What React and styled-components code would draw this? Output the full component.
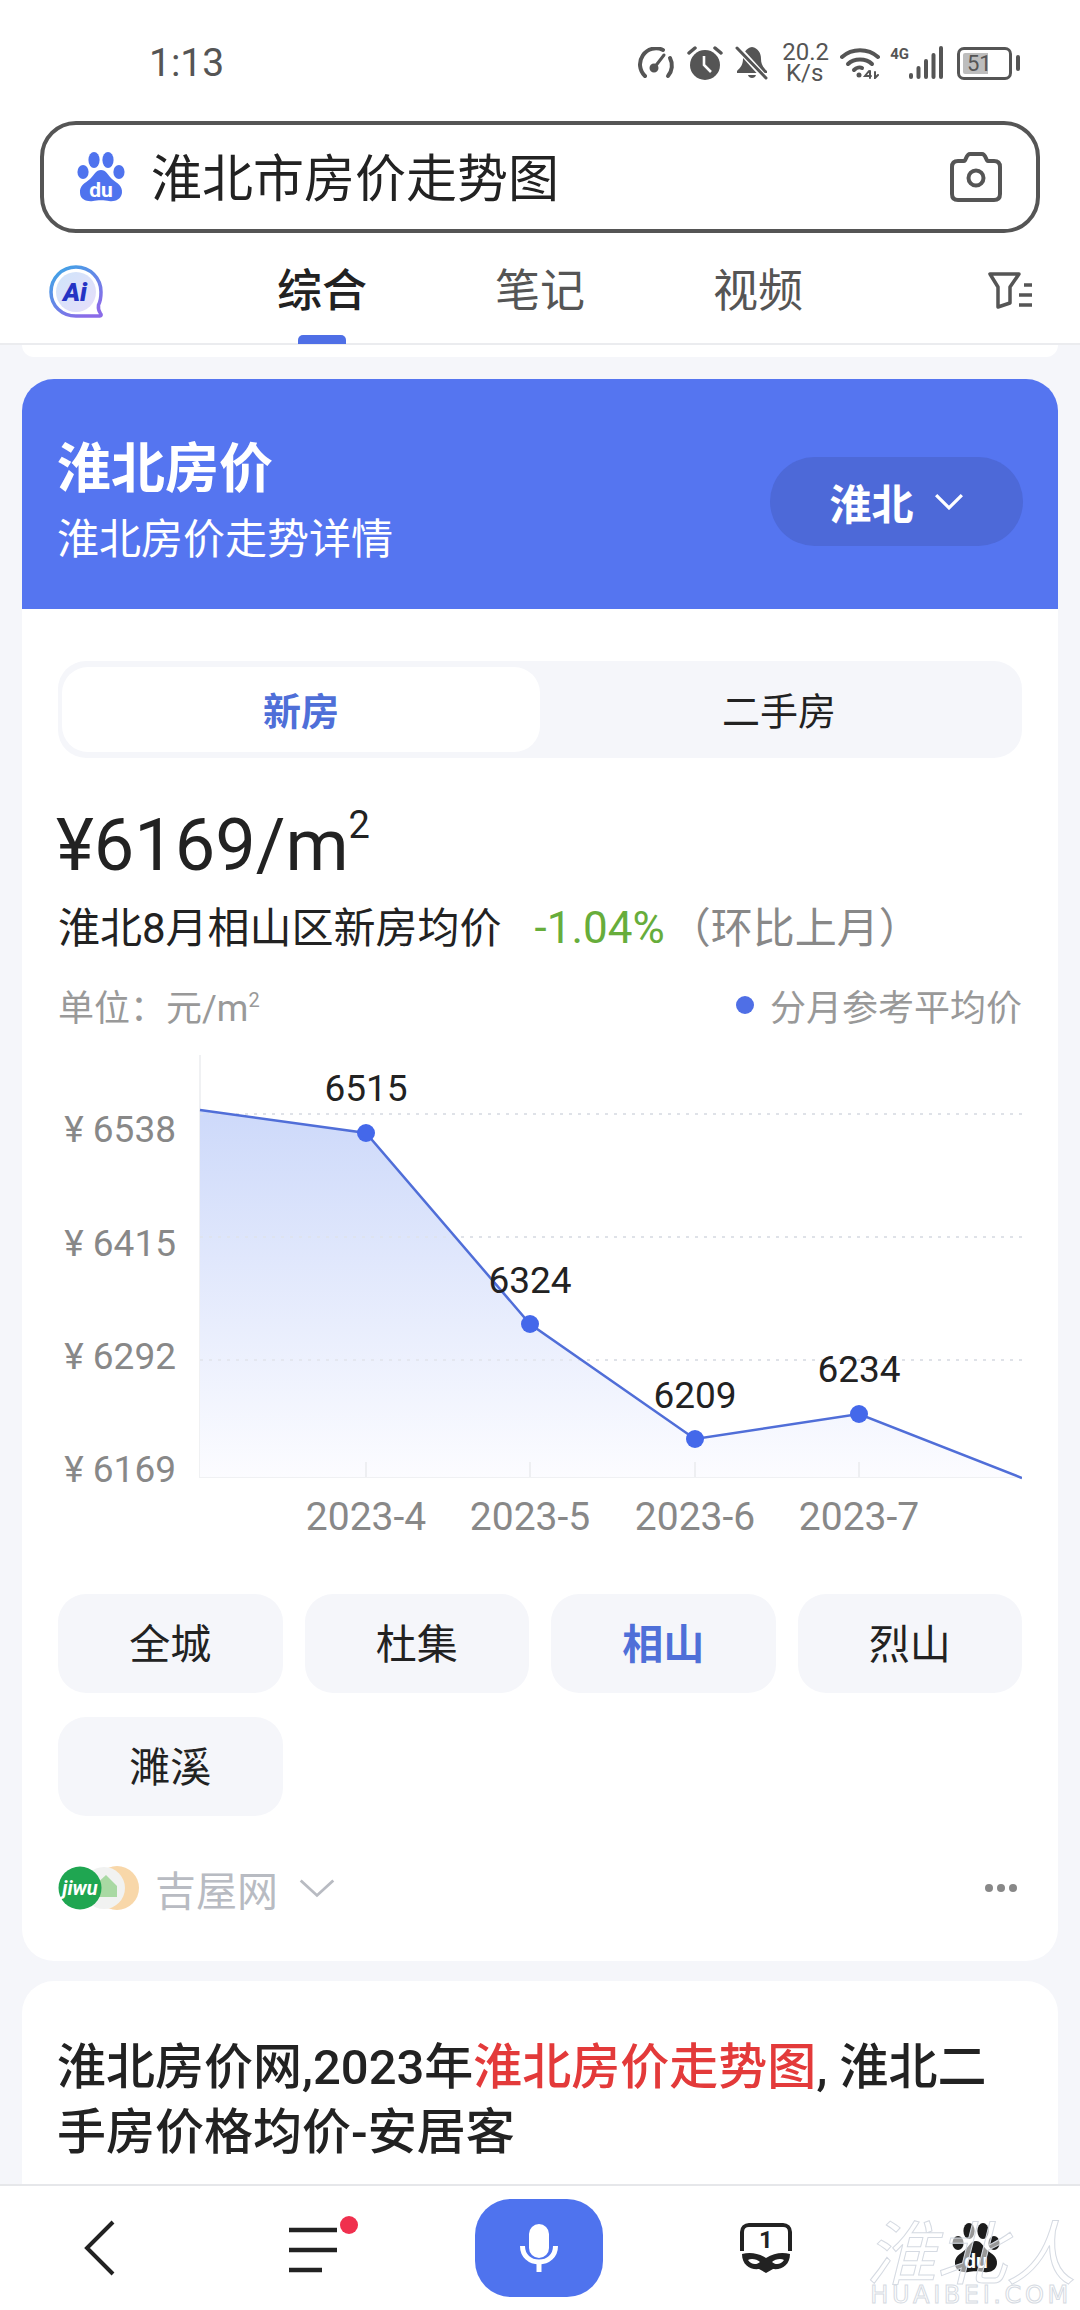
import React from "react";
import styled, { createGlobalStyle } from "styled-components";

const Global = createGlobalStyle`
  html, body { margin: 0; padding: 0; background: #f5f6fa; }
  * { box-sizing: border-box; }
  body { font-family: Roboto, "Noto Sans CJK SC", sans-serif; }
`;

const Page = styled.div`
  position: relative;
  width: 1080px;
  height: 2310px;
  overflow: hidden;
  display: flex;
  flex-direction: column;
  background: #f5f6fa;
  color: #222;
`;

const Header = styled.header`
  flex: none;
  height: 345px;
  background: #fff;
  border-bottom: 2px solid #ebecef;
  padding: 0 40px;
`;

const StatusBar = styled.div`
  height: 121px;
  display: flex;
  align-items: center;
  padding: 5px 0 0 109px;
  color: #555;
`;

const Time = styled.span`
  font-size: 39px;
  line-height: 1;
  margin-right: auto;
`;

const StatusIcons = styled.div`
  display: flex;
  align-items: center;
  margin-right: 20px;
`;

const Speed = styled.div`
  width: 45px;
  margin: 0 13px;
  font-size: 24px;
  line-height: 21px;
  text-align: center;
  white-space: nowrap;
`;

const NetLabel = styled.span`
  font-size: 15px;
  font-weight: 700;
  align-self: flex-start;
  margin: 5px 0 0 10px;
  line-height: 1;
`;

const Battery = styled.div`
  width: 55px;
  height: 33px;
  margin-left: 14px;
  border: 3px solid #555;
  border-radius: 7px;
  padding: 3px;
  display: flex;
`;

const BatteryFill = styled.div`
  flex: 1;
  border-radius: 2px;
  background: linear-gradient(90deg, #bdbdbd 58%, transparent 58%);
  font-size: 22px;
  line-height: 21px;
  padding-left: 4px;
`;

const BatteryNub = styled.div`
  width: 4px;
  height: 16px;
  margin-left: 4px;
  border-radius: 2px;
  background: #555;
`;

const SearchBox = styled.div`
  height: 112px;
  border: 4px solid #555;
  border-radius: 36px;
  display: flex;
  align-items: center;
  padding: 0 34px 0 33px;
  gap: 26px;
`;

const Query = styled.span`
  flex: 1;
  font-size: 51px;
  line-height: 1;
  color: #222;
  padding-top: 5px;
`;

const TabBar = styled.nav`
  position: relative;
  height: 110px;
  display: flex;
  align-items: center;
  margin: 0 -40px;
  padding: 8px 48px 0;
`;

const Tabs = styled.div`
  display: flex;
  margin-left: 109px;
`;

const Tab = styled.div`
  position: relative;
  width: 218px;
  text-align: center;
  font-size: 45px;
  line-height: 60px;
  font-weight: ${(p) => (p.$active ? 500 : 400)};
  color: ${(p) => (p.$active ? "#222" : "#555")};
`;

const TabMark = styled.div`
  position: absolute;
  left: 85px;
  top: 73px;
  width: 48px;
  height: 9px;
  border-radius: 5px 5px 0 0;
  background: #4f6fe6;
`;

const FilterSlot = styled.div`
  margin-left: auto;
  display: flex;
  margin-top: -2px;
`;

const Feed = styled.main`
  flex: 1;
  min-height: 0;
  overflow: hidden;
  padding: 0 22px;
`;

const CardTail = styled.div`
  height: 12px;
  background: #fff;
  border-radius: 0 0 30px 30px;
  margin-bottom: 22px;
`;

const Card = styled.section`
  background: #fff;
  border-radius: 32px;
  overflow: hidden;
  margin-bottom: 20px;
`;

const Banner = styled.div`
  height: 230px;
  background: #5575f0;
  color: #fff;
  display: flex;
  justify-content: space-between;
  align-items: flex-start;
  padding: 56px 35px 0 35px;
`;

const BannerTitle = styled.div`
  font-size: 54px;
  line-height: 70px;
  font-weight: 700;
`;

const BannerSub = styled.div`
  font-size: 42px;
  line-height: 60px;
  margin-top: 5px;
`;

const CityPill = styled.div`
  width: 253px;
  height: 89px;
  margin-top: 22px;
  border-radius: 45px;
  background: #4d69d8;
  display: flex;
  align-items: center;
  justify-content: center;
  gap: 20px;
  font-size: 42px;
  font-weight: 700;
`;

const Body = styled.div`
  padding: 52px 36px 43px;
`;

const Segment = styled.div`
  height: 97px;
  padding: 6px 4px;
  border-radius: 28px;
  background: #f5f6fa;
  display: flex;
`;

const SegmentItem = styled.div`
  flex: 1;
  display: flex;
  align-items: center;
  justify-content: center;
  font-size: 38px;
  padding-bottom: 3px;
  border-radius: 26px;
  font-weight: ${(p) => (p.$active ? 700 : 400)};
  color: ${(p) => (p.$active ? "#4f6fd8" : "#222")};
  background: ${(p) => (p.$active ? "#fff" : "transparent")};
`;

const Price = styled.div`
  margin: 43px 0 0 -2px;
  font-size: 72px;
  line-height: 90px;
  color: #222;
  white-space: nowrap;
`;

const PriceSup = styled.sup`
  font-size: 38px;
  line-height: 0;
  vertical-align: 32px;
`;

const Summary = styled.div`
  margin-top: 7px;
  font-size: 42px;
  line-height: 60px;
  display: flex;
  align-items: baseline;
  white-space: nowrap;
`;

const Change = styled.span`
  margin-left: 33px;
  font-size: 44px;
  color: #67ad3b;
`;

const Compare = styled.span`
  margin-left: 4px;
  color: #888;
`;

const UnitRow = styled.div`
  margin-top: 21px;
  height: 50px;
  display: flex;
  align-items: center;
  justify-content: space-between;
  font-size: 36px;
  color: #999;
`;

const UnitSup = styled.sup`
  font-size: 20px;
  line-height: 0;
  vertical-align: 14px;
`;

const Legend = styled.div`
  display: flex;
  align-items: center;
  gap: 16px;
`;

const LegendDot = styled.span`
  width: 18px;
  height: 18px;
  border-radius: 50%;
  background: #4f6fe6;
`;

const ChartWrap = styled.div`
  margin-top: 20px;
  height: 490px;
  svg { display: block; }
  text { font-family: Roboto, "Noto Sans CJK SC", sans-serif; }
`;

const Chips = styled.div`
  margin-top: 54px;
  display: grid;
  grid-template-columns: repeat(4, 1fr);
  column-gap: 22px;
  row-gap: 24px;
`;

const Chip = styled.div`
  height: 99px;
  border-radius: 28px;
  background: #f5f6fa;
  display: flex;
  align-items: center;
  justify-content: center;
  font-size: 41px;
  padding-bottom: 6px;
  font-weight: ${(p) => (p.$active ? 700 : 400)};
  color: ${(p) => (p.$active ? "#4f6fd8" : "#222")};
`;

const SourceRow = styled.div`
  margin-top: 42px;
  height: 60px;
  display: flex;
  align-items: center;
`;

const SourceName = styled.span`
  font-size: 41px;
  color: #b8bbc2;
  margin: 0 20px 0 15px;
`;

const MoreDots = styled.div`
  margin-left: auto;
  margin-right: 5px;
  display: flex;
  gap: 4px;
`;

const Dot = styled.span`
  width: 8px;
  height: 8px;
  border-radius: 50%;
  background: #888;
`;

const ResultCard = styled(Card)`
  padding: 54px 36px 60px 35px;
  margin-bottom: 0;
`;

const ResultTitle = styled.h2`
  margin: 0;
  font-size: 49px;
  line-height: 65px;
  font-weight: 500;
  color: #222;
`;

const Highlight = styled.em`
  font-style: normal;
  color: #e33a3a;
`;

const BottomNav = styled.footer`
  position: absolute;
  left: 0;
  right: 0;
  bottom: 0;
  height: 126px;
  background: #fff;
  border-top: 2px solid #e6e7ea;
  display: grid;
  grid-template-columns: 200px 226px 226px 228px 192px;
  align-items: center;
  justify-items: center;
`;

const MicButton = styled.div`
  width: 128px;
  height: 98px;
  border-radius: 36px;
  background: #4f73ee;
  display: flex;
  align-items: center;
  justify-content: center;
`;

const Watermark = styled.div`
  position: absolute;
  right: 3px;
  bottom: 4px;
  width: 212px;
  color: rgba(255, 255, 255, 0.55);
  -webkit-text-stroke: 1px #d5dae2;
  text-align: center;
  pointer-events: none;
`;

const WatermarkMark = styled.div`
  font-size: 70px;
  line-height: 54px;
  font-style: italic;
  white-space: nowrap;
`;

const WatermarkUrl = styled.div`
  font-family: "DejaVu Sans", sans-serif;
  font-size: 24px;
  line-height: 22px;
  letter-spacing: 3.6px;
  white-space: nowrap;
  margin: 2px -12px 0;
`;

const Paw = ({ color, size = 48 }) => (
  <svg width={size} height={size * 1.04} viewBox="0 0 48 50" fill={color} style={{ flex: "none" }}>
    <ellipse cx="6" cy="20" rx="5.6" ry="7" />
    <ellipse cx="17" cy="8" rx="5.6" ry="8" />
    <ellipse cx="31" cy="8" rx="5.6" ry="8" />
    <ellipse cx="42" cy="20" rx="5.6" ry="7" />
    <path d="M24 18C29 18 31 23 35 27C40 31 46 34 45 41C44 48 37 50 32 49C28 48 20 48 16 49C11 50 3 48 3 41C2 34 8 31 13 27C17 23 19 18 24 18Z" />
    <text x="24" y="45.5" textAnchor="middle" fill="#fff" fontSize="21" fontWeight="700" fontFamily="Roboto, sans-serif">du</text>
  </svg>
);

const GaugeIcon = () => (
  <svg width="37" height="32" viewBox="0 0 37 32" fill="none" stroke="#555" strokeWidth="4" strokeLinecap="round">
    <path d="M7 29A16 16 0 0 1 25 3" />
    <path d="M32 11A16 16 0 0 1 30 29" />
    <path d="M16 21L26 8" strokeWidth="3" />
    <circle cx="16" cy="21" r="2.5" fill="#555" />
  </svg>
);

const AlarmIcon = () => (
  <svg width="36" height="34" viewBox="0 0 36 34" style={{ marginLeft: 12 }}>
    <circle cx="18" cy="19" r="15" fill="#555" />
    <path d="M2 7L8 2M34 7L28 2" stroke="#555" strokeWidth="3.5" strokeLinecap="round" />
    <path d="M17 10V19L24 26" stroke="#fff" strokeWidth="2.6" fill="none" />
  </svg>
);

const BellOffIcon = () => (
  <svg width="34" height="34" viewBox="0 0 34 34" style={{ marginLeft: 12 }}>
    <path d="M17 1C11 2 8 7 8 13C8 19 5 22 2 25V27H32V25C29 22 26 19 26 13C26 7 23 2 17 1Z" fill="#555" />
    <path d="M13 29H21C20 33 14 33 13 29Z" fill="#555" />
    <path d="M3 2L31 33" stroke="#fff" strokeWidth="6" />
    <path d="M2 2L31 32" stroke="#555" strokeWidth="3" strokeLinecap="round" />
  </svg>
);

const WifiIcon = () => (
  <svg width="40" height="32" viewBox="0 0 40 32" fill="none" stroke="#555" strokeWidth="4" strokeLinecap="round">
    <path d="M2 10C12 1 28 1 38 10" />
    <path d="M8 17C14 11 26 11 32 17" />
    <path d="M14 23C16.500 20.500 20 20 22 21" />
    <circle cx="19" cy="28" r="2.500" fill="#555" stroke="none" />
    <path d="M29 24L25 29H31M30 24V31M35 25V31L38 28" strokeWidth="2" />
  </svg>
);

const SignalIcon = () => (
  <svg width="34" height="34" viewBox="0 0 34 34" fill="#555">
    <rect x="0" y="27" width="4" height="6" rx="2" />
    <rect x="7.500" y="20" width="4" height="13" rx="2" />
    <rect x="15" y="13" width="4" height="20" rx="2" />
    <rect x="22.500" y="7" width="4" height="26" rx="2" />
    <rect x="30" y="0" width="4" height="33" rx="2" />
  </svg>
);

const CameraIcon = () => (
  <svg width="52" height="50" viewBox="0 0 52 50" fill="none" stroke="#555" strokeWidth="4" strokeLinejoin="round" style={{ flex: "none" }}>
    <path d="M8 9H14C16 9 16 2 20 2H32C36 2 36 9 38 9H44C48 9 50 11 50 15V42C50 46 48 48 44 48H8C4 48 2 46 2 42V15C2 11 4 9 8 9Z" />
    <circle cx="26" cy="26" r="7.500" />
  </svg>
);

const AiIcon = () => (
  <svg width="56" height="56" viewBox="0 0 56 56" style={{ flex: "none" }}>
    <defs>
      <linearGradient id="aiStroke" x1="0" y1="0" x2="0.7" y2="1">
        <stop offset="0" stopColor="#3aa8e6" />
        <stop offset="1" stopColor="#8a6be8" />
      </linearGradient>
      <linearGradient id="aiFill" x1="0" y1="0" x2="1" y2="1">
        <stop offset="0" stopColor="#cfe4fa" />
        <stop offset="1" stopColor="#e7defa" />
      </linearGradient>
    </defs>
    <path d="M28 3C14 3 3 14 3 28C3 42 14 52 28 52H52C53.500 52 53.500 50.500 52.500 49.500C50.500 47 50 45 50.500 41C52.500 37 53 32 53 28C53 14 42 3 28 3Z" fill="#fff" stroke="url(#aiStroke)" strokeWidth="3.500" strokeLinejoin="round" />
    <circle cx="28" cy="28" r="20" fill="url(#aiFill)" />
    <text x="27" y="37" textAnchor="middle" fill="#2433c4" fontSize="26" fontWeight="900" fontStyle="italic" fontFamily="Roboto, sans-serif">Ai</text>
  </svg>
);

const FilterIcon = () => (
  <svg width="44" height="38" viewBox="0 0 44 38" fill="none" stroke="#555" strokeWidth="3.500" strokeLinejoin="round">
    <path d="M2 2H31L22 15V31L10 35V15Z" />
    <path d="M36 13H44M31 23H44M31 33H44" />
  </svg>
);

const ChevronDown = ({ width, height, stroke = "#fff", sw = 3 }) => (
  <svg width={width} height={height} viewBox="0 0 28 16" fill="none" stroke={stroke} strokeWidth={sw} preserveAspectRatio="none">
    <path d="M2 2L14 14L26 2" />
  </svg>
);

const SourceLogos = () => (
  <svg width="82" height="44" viewBox="0 0 82 44" style={{ flex: "none" }}>
    <circle cx="59" cy="22" r="22" fill="#f8d7a9" />
    <circle cx="46" cy="22" r="21" fill="#f1f2f1" />
    <path d="M36 20L48 9L59 20V31H36Z" fill="#a9d9a3" />
    <circle cx="22" cy="22" r="21.500" fill="#1fa651" />
    <text x="22" y="29" textAnchor="middle" fill="#fff" fontSize="20" fontWeight="700" fontStyle="italic" fontFamily="Roboto, sans-serif">jiwu</text>
  </svg>
);

const grid = [64, 187, 310];
const points = [
  [308, 83, "6515", 38, "2023-4"],
  [472, 274, "6324", 230, "2023-5"],
  [637, 389, "6209", 345, "2023-6"],
  [801, 364, "6234", 319, "2023-7"],
];
const line = [[142, 60], ...points.map((p) => [p[0], p[1]]), [964, 428]];
const yLabels = [["6538", 92], ["6415", 206], ["6292", 319], ["6169", 432]];

const PriceChart = () => {
  const path = line.map((p, i) => `${i ? "L" : "M"}${p[0]} ${p[1]}`).join(" ");
  return (
    <svg width="964" height="490" viewBox="0 0 964 490">
      <defs>
        <linearGradient id="area" x1="0" y1="0" x2="0" y2="1">
          <stop offset="0" stopColor="#cdd9fa" />
          <stop offset="1" stopColor="#fcfcff" />
        </linearGradient>
      </defs>
      <path d="M142 5V427H964" fill="none" stroke="#f0f1f3" strokeWidth="2" />
      {grid.map((y) => (
        <path key={y} d={`M142 ${y}H964`} stroke="#dfe2e8" strokeWidth="2" strokeDasharray="3 6" />
      ))}
      <path d={`${path} L964 427 L142 427 Z`} fill="url(#area)" />
      {grid.map((y) => (
        <path key={y} d={`M142 ${y}H964`} stroke="#dfe2e8" strokeWidth="2" strokeDasharray="3 6" opacity="0.6" />
      ))}
      {points.map((p) => (
        <path key={p[2]} d={`M${p[0]} 412V427`} stroke="#eeeff2" strokeWidth="2" />
      ))}
      <path d={path} fill="none" stroke="#506ed8" strokeWidth="2.500" />
      {points.map((p) => (
        <circle key={p[2]} cx={p[0]} cy={p[1]} r="9" fill="#4468ea" />
      ))}
      {points.map((p) => (
        <text key={p[2]} x={p[0]} y={p[3] + 13} textAnchor="middle" fontSize="37" fill="#222">{p[2]}</text>
      ))}
      {yLabels.map(([t, y]) => (
        <text key={t} x="118" y={y} textAnchor="end" fontSize="37" fill="#888">{`¥ ${t}`}</text>
      ))}
      {points.map((p) => (
        <text key={p[4]} x={p[0]} y="480" textAnchor="middle" fontSize="39" fill="#888">{p[4]}</text>
      ))}
    </svg>
  );
};

const BackIcon = () => (
  <svg width="32" height="56" viewBox="0 0 32 56" fill="none" stroke="#222" strokeWidth="4">
    <path d="M29 2L3 28L29 54" />
  </svg>
);

const MenuIcon = () => (
  <svg width="72" height="64" viewBox="0 0 72 64" style={{ marginLeft: 20 }}>
    <path d="M2 14H50M2 34H50M2 54H35" stroke="#222" strokeWidth="4.500" fill="none" />
    <circle cx="62" cy="9" r="9" fill="#f0304e" />
  </svg>
);

const MicIcon = () => (
  <svg width="38" height="48" viewBox="0 0 38 48" fill="none" stroke="#fff" strokeWidth="5">
    <rect x="9" y="0" width="20" height="34" rx="10" fill="#fff" stroke="none" />
    <path d="M2.500 22C2.500 32 10 38 19 38C28 38 35.500 32 35.500 22" />
    <path d="M19 38V48" />
  </svg>
);

const MaskIcon = () => (
  <svg width="52" height="50" viewBox="0 0 52 50">
    <path d="M2 28V9C2 5 5 2 9 2H43C47 2 50 5 50 9V28" fill="none" stroke="#222" strokeWidth="4" />
    <text x="26" y="25" textAnchor="middle" fontSize="24" fontWeight="700" fill="#222" fontFamily="Roboto, sans-serif">1</text>
    <path fillRule="evenodd" fill="#222" d="M2 31C10 29 18 30 26 35C34 30 42 29 50 31C50 42 42 47 33 46L26 50L19 46C10 47 2 42 2 31ZM8 37C11 42 17 42 20 39C17 36 11 35 8 37ZM44 37C41 42 35 42 32 39C35 36 41 35 44 37Z" />
  </svg>
);

const districts = ["全城", "杜集", "相山", "烈山", "濉溪"];

export default function App() {
  return (
    <Page>
      <Global />
      <Header>
        <StatusBar>
          <Time>1:13</Time>
          <StatusIcons>
            <GaugeIcon />
            <AlarmIcon />
            <BellOffIcon />
            <Speed>20.2<br />K/s</Speed>
            <WifiIcon />
            <NetLabel>4G</NetLabel>
            <SignalIcon />
            <Battery>
              <BatteryFill>51</BatteryFill>
            </Battery>
            <BatteryNub />
          </StatusIcons>
        </StatusBar>
        <SearchBox>
          <Paw color="#4f73ee" />
          <Query>淮北市房价走势图</Query>
          <CameraIcon />
        </SearchBox>
        <TabBar>
          <AiIcon />
          <Tabs>
            <Tab $active>综合<TabMark /></Tab>
            <Tab>笔记</Tab>
            <Tab>视频</Tab>
          </Tabs>
          <FilterSlot><FilterIcon /></FilterSlot>
        </TabBar>
      </Header>
      <Feed>
        <CardTail />
        <Card>
          <Banner>
            <div>
              <BannerTitle>淮北房价</BannerTitle>
              <BannerSub>淮北房价走势详情</BannerSub>
            </div>
            <CityPill>
              淮北
              <ChevronDown width={30} height={17} />
            </CityPill>
          </Banner>
          <Body>
            <Segment>
              <SegmentItem $active>新房</SegmentItem>
              <SegmentItem>二手房</SegmentItem>
            </Segment>
            <Price>¥6169/m<PriceSup>2</PriceSup></Price>
            <Summary>
              淮北8月相山区新房均价
              <Change>-1.04%</Change>
              <Compare>（环比上月）</Compare>
            </Summary>
            <UnitRow>
              <span>单位：元/m<UnitSup>2</UnitSup></span>
              <Legend><LegendDot />分月参考平均价</Legend>
            </UnitRow>
            <ChartWrap><PriceChart /></ChartWrap>
            <Chips>
              {districts.map((d) => (
                <Chip key={d} $active={d === "相山"}>{d}</Chip>
              ))}
            </Chips>
            <SourceRow>
              <SourceLogos />
              <SourceName>吉屋网</SourceName>
              <ChevronDown width={38} height={20} stroke="#b8bbc2" sw={2} />
              <MoreDots><Dot /><Dot /><Dot /></MoreDots>
            </SourceRow>
          </Body>
        </Card>
        <ResultCard>
          <ResultTitle>
            淮北房价网,2023年<Highlight>淮北房价走势图</Highlight>, 淮北二手房价格均价-安居客
          </ResultTitle>
        </ResultCard>
      </Feed>
      <BottomNav>
        <BackIcon />
        <MenuIcon />
        <MicButton><MicIcon /></MicButton>
        <MaskIcon />
        <Paw color="#1c1c1c" />
      </BottomNav>
      <Watermark>
        <WatermarkMark>淮北人</WatermarkMark>
        <WatermarkUrl>HUAIBEI.COM</WatermarkUrl>
      </Watermark>
    </Page>
  );
}
